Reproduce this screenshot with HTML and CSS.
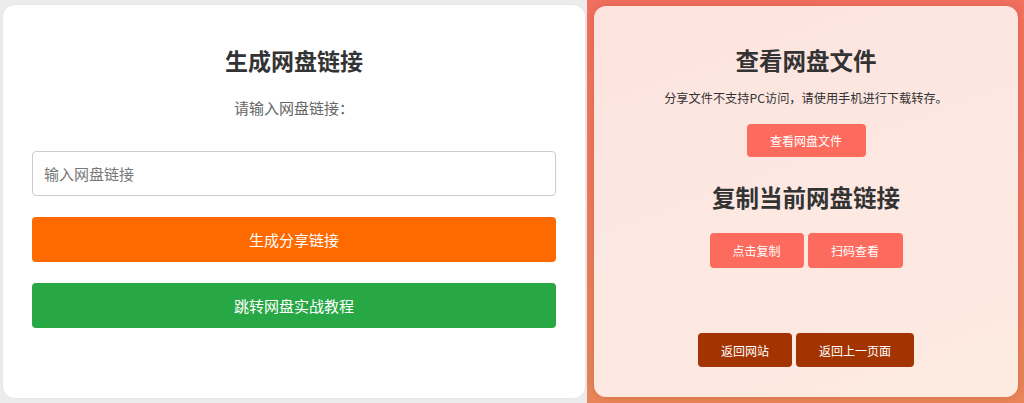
FILE: index.html
```html
<!DOCTYPE html>
<html lang="zh-CN">
<head>
<meta charset="utf-8">
<title>网盘链接</title>
<link rel="stylesheet" href="styles.css">
</head>
<body>
<div class="page">
  <div class="left-wrap">
    <div class="card-left">
      <h1 class="title">生成网盘链接</h1>
      <p class="subtitle">请输入网盘链接：</p>
      <input class="link-input" type="text" placeholder="输入网盘链接">
      <button class="btn-wide btn-orange">生成分享链接</button>
      <button class="btn-wide btn-green">跳转网盘实战教程</button>
    </div>
  </div>
  <div class="right-wrap">
    <div class="card-right">
      <h2 class="title title-right">查看网盘文件</h2>
      <p class="note">分享文件不支持PC访问，请使用手机进行下载转存。</p>
      <div class="row row-first">
        <button class="btn-small btn-coral btn-view">查看网盘文件</button>
      </div>
      <h2 class="title title-right title-second">复制当前网盘链接</h2>
      <div class="row row-copy">
        <button class="btn-small btn-coral btn-copy">点击复制</button>
        <button class="btn-small btn-coral btn-scan">扫码查看</button>
      </div>
      <div class="row row-back">
        <button class="btn-small btn-dark btn-site">返回网站</button>
        <button class="btn-small btn-dark btn-prev">返回上一页面</button>
      </div>
    </div>
  </div>
</div>
</body>
</html>
```
FILE: styles.css
```css
* { box-sizing: border-box; }
html, body { margin: 0; padding: 0; }
body {
  background: #ececec;
  font-family: "Noto Sans CJK SC", "Noto Sans", sans-serif;
  width: 1024px;
  height: 403px;
  overflow: hidden;
}
.page {
  display: flex;
  height: 403px;
}
.left-wrap {
  padding: 5px 2px 5px 3px;
}
.card-left {
  width: 582px;
  height: 393px;
  background: #ffffff;
  border-radius: 12px;
  padding: 40px 29px 0;
  display: flex;
  flex-direction: column;
  align-items: stretch;
  box-shadow: 0 0 3px rgba(0,0,0,0.06);
}
.title {
  margin: 0;
  font-size: 23px;
  line-height: 30px;
  font-weight: 700;
  color: #333;
  text-align: center;
}
.title-right { font-size: 23.5px; }
.subtitle {
  margin: 23px 0 0;
  font-size: 15px;
  line-height: 20px;
  color: #666;
  text-align: center;
}
.link-input {
  margin-top: 33px;
  height: 45px;
  width: 100%;
  border: 1px solid #cccccc;
  border-radius: 4px;
  padding: 0 11px;
  font-family: inherit;
  font-size: 15px;
  color: #333;
  background: #fff;
  outline: none;
}
.link-input::placeholder { color: #777; }
.btn-wide {
  margin-top: 21px;
  height: 45px;
  width: 100%;
  border: none;
  border-radius: 4px;
  color: #fff;
  font-family: inherit;
  font-size: 15px;
}
.btn-orange { background: #ff6a00; }
.btn-green { background: #28a745; }

.right-wrap {
  flex: 1;
  padding: 6px 6px 6px 7px;
  background: linear-gradient(180deg, #f2705f 0%, #ee7a5c 50%, #e98659 100%);
}
.card-right {
  width: 424px;
  height: 391px;
  border-radius: 12px;
  background: linear-gradient(160deg, #fde3de 0%, #fde8e2 55%, #fdeae0 100%);
  padding: 39px 0 0;
  display: flex;
  flex-direction: column;
  align-items: center;
  box-shadow: 0 0 8px rgba(120,40,20,0.22);
}
.note {
  margin: 14px 0 0;
  font-size: 12.2px;
  line-height: 18px;
  color: #333;
}
.row {
  display: flex;
  gap: 4px;
  justify-content: center;
}
.row-first { margin-top: 17px; }
.title-second { margin-top: 25px; }
.row-copy { margin-top: 21px; }
.row-back { margin-top: 65px; }
.btn-small {
  border: none;
  border-radius: 4px;
  color: #fff;
  font-family: inherit;
  font-size: 12px;
  padding: 0;
}
.btn-coral { background: #fd6b5e; }
.btn-dark { background: #a33402; }
.btn-view { width: 119px; height: 33px; }
.btn-copy { width: 94px; height: 35px; }
.btn-scan { width: 95px; height: 35px; }
.btn-site { width: 94px; height: 34px; }
.btn-prev { width: 118px; height: 34px; }
```
